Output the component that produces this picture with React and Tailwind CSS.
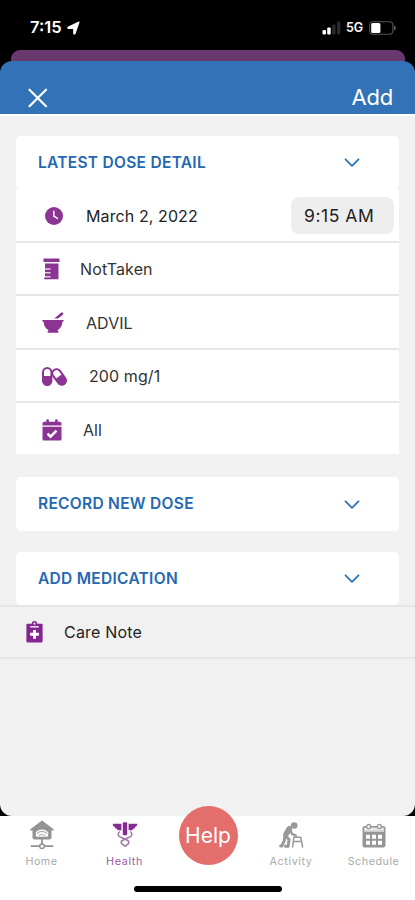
const PURPLE = '#8b3494';

function Chevron() {
  return (
    <svg className="mt-px" width="16" height="10" viewBox="0 0 16 10" fill="none" stroke="#2f74b8" strokeWidth="1.8" strokeLinecap="round" strokeLinejoin="round">
      <path d="M1.500 1.300 8 7.900l6.500-6.600" />
    </svg>
  );
}

function ClockIcon() {
  return (
    <svg width="18" height="18" viewBox="0 0 18 18">
      <circle cx="9" cy="9" r="9" fill={PURPLE} />
      <path d="M8.800 4.200v5l3.600 2.200" fill="none" stroke="#fff" strokeWidth="1.500" strokeLinecap="round" />
    </svg>
  );
}

function BottleIcon() {
  return (
    <svg width="17" height="22" viewBox="0 0 17 22" fill={PURPLE}>
      <path d="M.5.500h16v3.600H.5zM2 5.500h13.500v15.800H1.200v-1.900h6.300v-1.500H2v-2.300h5.500v-1.500H2v-2.300h5.500v-1.500H2z" />
      <path d="M2 5.500h5.500v15.800H2z" opacity=".25" />
    </svg>
  );
}

function MortarIcon() {
  return (
    <svg width="22" height="21" viewBox="0 0 22 21" fill={PURPLE}>
      <path d="M12.300 6.600 18.900.7c.9-.7 2.400-.2 2.400 1 0 .6-.3.900-.7 1.200L16 6.600zM.8 8h20.400c.8 0 .8 1.500 0 1.500h-.7c-.3 4.200-2 7.100-5.100 8.700l1 1.400c.4.700.1 1.200-.6 1.200H6.200c-.7 0-1-.5-.6-1.200l1-1.400C3.500 16.600 1.800 13.700 1.500 9.500H.8C0 9.500 0 8 .8 8z" />
    </svg>
  );
}

function PillsIcon() {
  return (
    <svg width="25" height="19" viewBox="0 0 25 19">
      <rect x="1" y="1" width="8.400" height="17" rx="4.200" fill="#fff" stroke={PURPLE} strokeWidth="2" />
      <path d="M.6 9h9.200v5a4.600 4.600 0 0 1-9.200 0z" fill={PURPLE} />
      <g transform="rotate(-36 17.200 10)">
        <rect x="13" y="1.300" width="8.400" height="17.200" rx="4.200" fill="#fff" stroke={PURPLE} strokeWidth="2" />
        <path d="M12.500 9.500h9.400v5a4.700 4.700 0 0 1-9.400 0z" fill={PURPLE} />
      </g>
    </svg>
  );
}

function CalendarCheckIcon() {
  return (
    <svg width="20" height="22" viewBox="0 0 20 22" fill={PURPLE}>
      <path d="M.5 6.200V4.600c0-1 .8-1.800 1.800-1.800h2V1.300c0-1.300 2.600-1.300 2.600 0v1.500h6.200V1.300c0-1.300 2.600-1.300 2.600 0v1.500h2c1 0 1.800.8 1.800 1.800v1.600z" />
      <path d="M.5 6.200h19v1.600H.5z" opacity=".35" />
      <path d="M.5 7.900h19v12c0 1-.8 1.700-1.800 1.700H2.300c-1 0-1.800-.7-1.800-1.700z" />
      <path d="m5.500 14.700 3 3 6-6" fill="none" stroke="#fff" strokeWidth="2.500" />
    </svg>
  );
}

function CareNoteIcon() {
  return (
    <svg width="17" height="22" viewBox="0 0 17 22">
      <path d="M1.200 2.800h4.600a2.700 2.700 0 0 1 5.400 0h4.600c.5 0 .8.300.8.800v17c0 .5-.3.800-.8.800H1.200c-.5 0-.8-.3-.8-.8v-17c0-.5.300-.8.800-.8z" fill="#842592" />
      <circle cx="8.500" cy="2.700" r="1.100" fill="#f1f1f1" />
      <path d="M4.300 5.800h8.400" stroke="#f1f1f1" strokeWidth="1.500" />
      <path d="M8.500 8.900v8.800M4.100 13.300h8.800" stroke="#fff" strokeWidth="3" />
    </svg>
  );
}

function HomeIcon() {
  return (
    <svg width="24" height="30" viewBox="0 0 24 30" fill="#939393">
      <path d="M12 .5 23.700 9.200v1.200h-2.200v7.100c0 1.100-.8 1.900-1.900 1.900H4.400c-1.100 0-1.900-.8-1.900-1.900v-7.100H.3V9.200z" />
      <path d="M5.800 15.500V12.600c2.300-4 10.100-4 12.400 0v2.900c0 .8-.4 1.200-1.200 1.200H7c-.8 0-1.200-.4-1.200-1.200z" fill="#fff" />
      <path d="M7 13.600c2-3 8-3 10 0M9 16c1.200-2 4.800-2 6 0" fill="none" stroke="#aaa" strokeWidth="1.200" />
      <path d="M12 19v6M.7 26.200H9M15 26.200h8.300" fill="none" stroke="#939393" strokeWidth="1.700" />
      <circle cx="12" cy="26.200" r="2.300" fill="#fff" stroke="#939393" strokeWidth="1.500" />
    </svg>
  );
}

function HealthIcon() {
  return (
    <svg width="26" height="26" viewBox="0 0 26 26" fill="#852c91">
      <path d="M.8 1.700h8.600v6.600H6.600C5.600 8.300 5 7.500 5 6.700 3.700 6.800 3 6 3 4.900 1.500 4.700.8 3.500.8 1.700zM25.200 1.700h-8.600v6.600h2.800c1 0 1.600-.8 1.600-1.600 1.300.1 2-.7 2-1.800 1.500-.2 2.200-1.400 2.200-3.200z" />
      <rect x="10.800" y=".3" width="4.400" height="13" rx="1" />
      <g fill="none" stroke="#a273aa" strokeWidth="1.500">
        <path d="M7.800 9.500c-2.800 2-2 5 1.500 6l6 2.700c2.500 1.200 1.800 3.700-.5 4.500L13 24.500" />
        <path d="M18.200 9.500c2.800 2 2 5-1.500 6l-6 2.700c-2.500 1.200-1.800 3.700.5 4.500L13 24.500" />
      </g>
    </svg>
  );
}

function ActivityIcon() {
  return (
    <svg width="25" height="26" viewBox="0 0 25 26" fill="none" stroke="#999" strokeLinecap="round" strokeLinejoin="round">
      <circle cx="15.200" cy="3.500" r="3.300" fill="#999" stroke="none" />
      <path d="M10.300 6.700 7 12.300" strokeWidth="5.600" />
      <path d="m11.500 7.500 1.200 4.200 4.200 1.900" strokeWidth="2.300" />
      <path d="m6.800 14.200 3.300 3.300-1 6.700H6.500" strokeWidth="3" />
      <path d="m5.800 14.500-.6 4.300-2.400 5.200H1.600" strokeWidth="3" />
      <path d="M14.800 15.300h7M14.800 15.300l-1.200 9.700M21.800 15.300 23.600 25M14.600 19.600h7.800" strokeWidth="1.500" />
    </svg>
  );
}

function ScheduleIcon() {
  return (
    <svg width="24" height="25" viewBox="0 0 24 25">
      <rect x=".5" y="3" width="23" height="21.500" rx="2.200" fill="#959595" />
      <path d="M2 8.700h20" stroke="#fff" strokeWidth="1.200" />
      <path d="M4 11.700h4v4H4zM10 11.700h4v4h-4zM16 11.700h4v4h-4zM4 17.700h4v4H4zM10 17.700h4v4h-4zM16 17.700h4v4h-4z" fill="#fff" />
      <path d="M2.200 4.600h19.600v3.200H2.200z" fill="#e8e8e8" />
      <circle cx="6.700" cy="3.600" r="2.100" fill="#fff" stroke="#959595" strokeWidth="1.300" />
      <circle cx="17.300" cy="3.600" r="2.100" fill="#fff" stroke="#959595" strokeWidth="1.300" />
      <path d="M1.500 9.300h21" stroke="#959595" strokeWidth="1.400" />
    </svg>
  );
}

function StatusBar() {
  return (
    <div className="flex h-[50px] items-start justify-between pt-[18px] pr-[19px] pl-[30px] text-white">
      <div className="flex items-center gap-[5px]">
        <span className="w-[32px] text-[16.500px] leading-[19px] font-semibold whitespace-nowrap">7:15</span>
        <svg width="13" height="14" viewBox="0 0 13 14" fill="#fff" stroke="#fff" strokeWidth="1.200" strokeLinejoin="round"><path d="M12 1 7.900 12.800H6.800V7.300H1V6.200z" /></svg>
      </div>
      <div className="flex h-[19px] items-center">
        <svg width="19" height="14" viewBox="0 0 19 14">
          <rect x=".5" y="9" width="3.500" height="4.500" rx="1" fill="#fff" />
          <rect x="5.200" y="6.500" width="3.500" height="7" rx="1" fill="#fff" />
          <rect x="10.200" y="3.500" width="3.300" height="10" rx="1" fill="#2a2a2a" />
          <rect x="15" y=".5" width="3.300" height="13" rx="1" fill="#2a2a2a" />
        </svg>
        <span className="mt-px ml-[5px] w-[23px] text-[12.500px] font-semibold tracking-[-0.200px] whitespace-nowrap">5G</span>
        <svg width="27" height="14" viewBox="0 0 27 14">
          <rect x=".6" y=".7" width="23.300" height="12.600" rx="3.500" fill="none" stroke="#555" strokeWidth="1.100" />
          <path d="M25.200 4.500c1.900.8 1.900 4.200 0 5z" fill="#777" />
          <rect x="2.200" y="2" width="9.200" height="10" rx="1.500" fill="#fff" />
        </svg>
      </div>
    </div>
  );
}

function SectionHeader({ children, size }) {
  return (
    <div className={`flex items-center justify-between rounded-[5px] bg-white pr-[39px] pl-[22px] tracking-[0.290px] ${size}`}>
      <h2 className="text-[15.500px] font-semibold whitespace-nowrap text-[#2368b2]">{children}</h2>
      <Chevron />
    </div>
  );
}

function Row({ icon, iconBox, text, last, children }) {
  return (
    <div className={`flex items-center bg-white pt-[2px] ${last ? 'h-[51px]' : 'h-[53.500px] border-b-2 border-[#e7e7e7]'}`}>
      <div className={`flex shrink-0 items-center ${iconBox}`}>{icon}</div>
      {text}
      {children}
    </div>
  );
}

function Tab({ icon, label, position, color }) {
  return (
    <div className={`flex flex-col items-center pt-[4px] ${position}`}>
      <div className="flex h-[30px] items-center">{icon}</div>
      <span className={`mt-[5px] text-[10.800px] leading-[14px] whitespace-nowrap ${color}`}>{label}</span>
    </div>
  );
}

export default function App() {
  return (
    <div className="flex h-[900px] w-[415px] flex-col overflow-hidden bg-black font-['Inter','Liberation_Sans',sans-serif]">
      <StatusBar />
      <div className="mr-[10px] ml-[11px] h-[11px] shrink-0 rounded-t-[9px] bg-[#69386f]" />
      <header className="flex h-[53px] shrink-0 items-start justify-between rounded-t-[12px] bg-[#3273b7] pr-[22px] pl-[28px] text-white">
        <svg className="mt-[27px]" width="20" height="20" viewBox="0 0 20 20" fill="none" stroke="#fff" strokeWidth="2.200" strokeLinecap="round">
          <path d="m1.500 1.700 16.500 16.500M18 1.700 1.500 18.200" />
        </svg>
        <button className="mt-[21px] text-[22px] leading-[30px] tracking-[-0.200px]">Add</button>
      </header>

      <main className="flex h-[702px] shrink-0 flex-col rounded-b-[12px] border-t-2 border-white bg-[#f1f1f1]">
        <section className="mx-4 mt-[20px]">
          <SectionHeader size="h-[53px]">LATEST DOSE DETAIL</SectionHeader>
          <Row
            icon={<ClockIcon />}
            iconBox="w-[70px] pl-[29px]"
            text={<span className="text-[16px] tracking-[0.100px] whitespace-nowrap text-[#222]">March 2, 2022</span>}
          >
            <div className="mr-[5px] ml-auto flex h-[37px] w-[103px] items-center rounded-[8px] bg-[#eee] pl-[13px] text-[17.500px] tracking-[0.550px] whitespace-nowrap text-[#222]">
              9:15 AM
            </div>
          </Row>
          <Row icon={<BottleIcon />} iconBox="w-[64px] pl-[27px]" text={<span className="text-[16px] tracking-[0.120px] text-[#333]">NotTaken</span>} />
          <Row icon={<MortarIcon />} iconBox="w-[70px] pl-[26px]" text={<span className="text-[16px] tracking-[0.050px] text-[#333]">ADVIL</span>} />
          <Row icon={<PillsIcon />} iconBox="w-[73px] pl-[26px]" text={<span className="text-[16px] tracking-[0.100px] text-[#333]">200 mg/1</span>} />
          <Row last icon={<CalendarCheckIcon />} iconBox="w-[67px] pl-[26px]" text={<span className="text-[16px] text-[#333]">All</span>} />
        </section>

        <div className="mx-4 mt-[23px]">
          <SectionHeader size="h-[54px]">RECORD NEW DOSE</SectionHeader>
        </div>
        <div className="mx-4 mt-[21px]">
          <SectionHeader size="h-[53px]">ADD MEDICATION</SectionHeader>
        </div>

        <div className="flex h-[54px] items-center border-y-2 border-[#e6e6e6] pl-[26px]">
          <CareNoteIcon />
          <span className="ml-[21px] text-[16px] tracking-[0.200px] text-[#222]">Care Note</span>
        </div>
      </main>

      <nav className="flex h-[84px] shrink-0 flex-col items-center bg-white">
        <div className="flex h-[70px] w-full items-start">
          <Tab icon={<HomeIcon />} label="Home" position="w-[83px]" color="text-[#aaa] tracking-[0.400px]" />
          <Tab icon={<HealthIcon />} label="Health" position="w-[83px]" color="text-[#9a5aa4] tracking-[0.600px]" />
          <button className="mx-[12.500px] -mt-[10px] flex size-[59px] shrink-0 items-center justify-center rounded-full bg-[#e46e6b] text-[21px] text-white">
            Help
          </button>
          <Tab icon={<ActivityIcon />} label="Activity" position="w-[82px]" color="text-[#aaa] tracking-[0.600px]" />
          <Tab icon={<ScheduleIcon />} label="Schedule" position="w-[83px]" color="text-[#aaa] tracking-[0.500px]" />
        </div>
        <div className="h-[6px] w-[148px] rounded-full bg-black" />
      </nav>
    </div>
  );
}
